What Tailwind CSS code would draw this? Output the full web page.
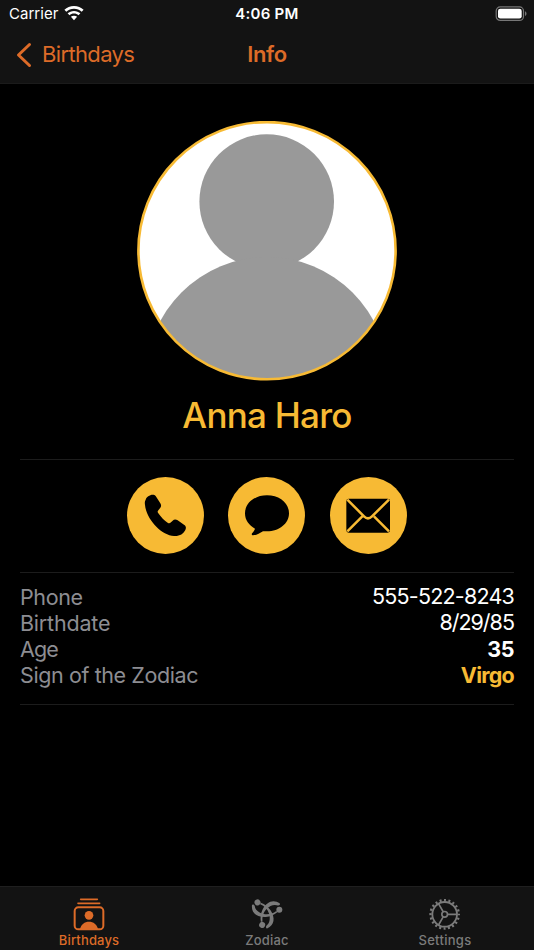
<!DOCTYPE html>
<html lang="en">
<head>
<meta charset="utf-8">
<title>Info</title>
<script src="https://cdn.jsdelivr.net/npm/@tailwindcss/browser@4"></script>
</head>
<body class="bg-black">
<div class="flex h-[950px] w-[534px] flex-col overflow-hidden bg-black font-[Inter,sans-serif] text-white">
  <header class="h-[84px] shrink-0 border-b border-[#1b1b1b] bg-[#131313]">
    <div class="grid h-7 grid-cols-3 items-center px-[8px]">
      <div class="flex items-center gap-[6px] pl-px">
        <span class="text-[15px] leading-7 tracking-[0.02px]">Carrier</span>
        <svg class="-mt-[2px] h-[15px] w-5" viewBox="0 0 20 15" fill="#fff"><path d="M10 0C6.200 0 2.900 1.400.4 3.700L2.300 5.700C4.400 3.900 7 2.800 10 2.800s5.600 1.100 7.700 2.900l1.900-2C17.100 1.400 13.800 0 10 0Z"/><path d="M10 4.900c-2.500 0-4.700.9-6.400 2.400l1.900 2c1.200-1.100 2.700-1.700 4.500-1.700s3.300.6 4.500 1.700l1.900-2C14.700 5.800 12.500 4.900 10 4.900Z"/><path d="M10 9.700c-1.200 0-2.300.4-3.100 1.100L10 14.200l3.100-3.400c-.8-.7-1.900-1.100-3.100-1.100Z"/></svg>
      </div>
      <span class="text-center text-[15px] leading-7 font-semibold tracking-[0.25px] whitespace-nowrap">4:06 PM</span>
      <svg class="-mr-px h-4 w-8 justify-self-end" viewBox="0 0 32 16"><rect x="1.200" y=".9" width="27.300" height="13.500" rx="4" fill="none" stroke="#777" stroke-width="1.200"/><rect x="3" y="2.700" width="23.700" height="9.900" rx="2.300" fill="#fff"/><path d="M30 5.300c2 .8 2 3.900 0 4.700Z" fill="#777"/></svg>
    </div>
    <div class="grid h-[54px] grid-cols-3 items-center px-4 text-[#dd6b28]">
      <div class="flex items-center gap-[10px]">
        <svg class="h-[26px] w-4" viewBox="0 0 16 26" fill="none" stroke="currentColor" stroke-width="3" stroke-linecap="round" stroke-linejoin="round"><path d="M13.500 2.500 2.500 13l11 10.500"/></svg>
        <span class="-mt-[2px] text-[22px] leading-[52px] tracking-[-0.65px]">Birthdays</span>
      </div>
      <h1 class="-mt-[2px] text-center text-[22px] leading-[52px] font-semibold tracking-[-0.4px]">Info</h1>
    </div>
  </header>

  <main class="flex grow flex-col px-5 pt-[37px]">
    <svg class="size-[260px] self-center" viewBox="0 0 260 260">
      <defs><clipPath id="avatar"><circle cx="130" cy="129.700" r="129"/></clipPath></defs>
      <g clip-path="url(#avatar)"><rect width="260" height="260" fill="#fff"/><circle cx="129.700" cy="80.600" r="67.300" fill="#999"/><circle cx="130" cy="257" r="121" fill="#999"/></g>
      <circle cx="130" cy="129.700" r="128.600" fill="none" stroke="#f7ba34" stroke-width="2.600"/>
    </svg>
    <h2 class="h-[78px] text-center text-[35px] leading-[68px] font-medium tracking-[-0.75px] text-[#f7ba34]">Anna Haro</h2>
    <div class="flex h-[114px] justify-center border-y border-[#1c1c1c] pt-[17px]">
      <svg class="size-[77px]" viewBox="21 81 231 231"><circle cx="136.500" cy="196.500" r="115.500" fill="#f7ba34"/><path d="M77 149C79 141 89 134 98 134c4 0 7 1 9 4l14 22c3 5 3 9 0 13l-7 9c-2 3-1 5 1 8 8 12 18 22 29 29 3 2 6 1 9-2l5-5c4-4 10-4 15-1l20 14c5 3 6 9 3 15-6 12-17 19-34 18-38-2-83-50-87-93-1-7-1-11 2-16Z"/></svg>
      <svg class="mr-[25px] ml-6 size-[77px]" viewBox="24 81 231 231"><circle cx="139.500" cy="196.500" r="115.500" fill="#f7ba34"/><path d="M141 136c37 0 66 23 66 54s-29 54-66 54c-5 0-9-1-12 0-10 5-19 12-30 12-4 0-5-4-2-7 4-4 6-8 8-13-18-10-30-25-30-46 0-31 29-54 66-54Z"/></svg>
      <svg class="size-[77px]" viewBox="330 81 231 231"><circle cx="445.500" cy="196.500" r="115.500" fill="#f7ba34"/><rect x="379" y="146" width="131" height="102" rx="7"/><path d="m382 149 50 50q12 12 24 0l51-50M382 244l45-45M507 244l-45-45" fill="none" stroke="#f7ba34" stroke-width="7.500"/></svg>
    </div>
    <dl class="grid h-[132px] grid-cols-[1fr_auto] grid-rows-[repeat(4,26.200px)] border-b border-[#1c1c1c] pt-[10.500px] text-[21.500px] leading-[26px] tracking-[-0.4px]">
      <dt class="text-[#8d8d92]">Phone</dt><dd class="-mt-px text-right tracking-[-0.8px]">555-522-8243</dd>
      <dt class="text-[#8d8d92] tracking-[-0.2px]">Birthdate</dt><dd class="-mt-px text-right tracking-[-1px]">8/29/85</dd>
      <dt class="text-[#8d8d92] tracking-[-0.9px]">Age</dt><dd class="text-right font-bold">35</dd>
      <dt class="text-[#8d8d92]">Sign of the Zodiac</dt><dd class="text-right font-bold tracking-[-0.75px] text-[#f7ba34]">Virgo</dd>
    </dl>
  </main>

  <nav class="grid h-16 shrink-0 grid-cols-3 border-t border-[#1f1f1f] bg-[#131313] text-[13px] leading-4 font-medium text-[#7b7b7b]">
    <a class="flex flex-col items-center pt-[10px] text-[#dd6b28]">
      <svg class="h-9 w-10" viewBox="87 51 120 108" fill="none" stroke="currentColor" stroke-width="5" stroke-linecap="round"><path d="M122 58h50M114 70h65"/><rect x="104" y="82" width="86" height="66" rx="11" stroke-width="6"/><circle cx="147" cy="106" r="13" fill="currentColor" stroke="none"/><path d="M120 147c3-14 14-22 27-22s24 8 27 22Z" fill="currentColor" stroke="none"/></svg>
      <span class="-mt-px tracking-[0.150px]">Birthdays</span>
    </a>
    <a class="flex flex-col items-center pt-[10px]">
      <svg class="h-9 w-10" viewBox="51 51 120 108" fill="currentColor">
        <defs><g id="arm"><path d="M-43-22C-46 2-28 15-2 14 12 13 23 8 33 0L30-4C19 4 6 8-8 5-24 1-34-9-35-20-37-24-42-25-43-22Z"/><circle cx="39" cy="-8" r="9"/></g></defs>
        <g transform="translate(109 97)"><use href="#arm"/><use href="#arm" transform="rotate(120)"/><use href="#arm" transform="rotate(240)"/></g>
      </svg>
      <span class="-mt-px tracking-[0.150px]">Zodiac</span>
    </a>
    <a class="flex flex-col items-center pt-[10px]">
      <svg class="h-9 w-10" viewBox="60 51 120 108" fill="none" stroke="currentColor"><circle cx="119" cy="103" r="37" stroke-width="5.500"/><circle cx="119" cy="103" r="42.500" stroke-width="7" stroke-dasharray="6 7.351" stroke-dashoffset="3" pathLength="267.030"/><circle cx="119" cy="103" r="8.500" stroke-width="5"/><path d="M128 103h27M114.500 95.200 101 71.800M114.500 110.800 101 134.200" stroke-width="5"/></svg>
      <span class="-mt-px tracking-[0.300px]">Settings</span>
    </a>
  </nav>
</div>
</body>
</html>
